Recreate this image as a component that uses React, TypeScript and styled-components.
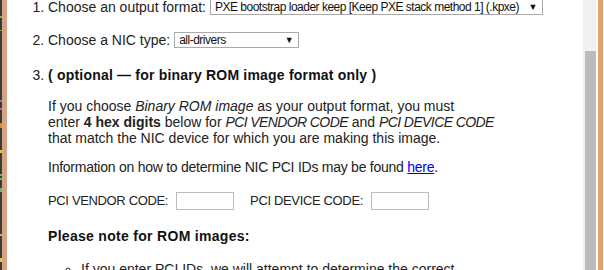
import React from 'react';
import styled, { createGlobalStyle } from 'styled-components';

const GlobalStyle = createGlobalStyle`
  html, body {
    margin: 0;
    padding: 0;
    background: #ffffff;
    overflow: hidden;
  }
  body {
    font-family: 'Liberation Sans', Arial, sans-serif;
    color: #222222;
  }
`;

const Frame = styled.div`
  display: flex;
  width: 604px;
  height: 270px;
  overflow: hidden;
  background: #ffffff;
`;

const LeftEdge = styled.div`
  width: 7px;
  flex: none;
  display: flex;
`;

const DarkStrip = styled.div`
  width: 2px;
  background: linear-gradient(
    to bottom,
    #3a3a3a 0 16px,
    #7ab85a 16px 18px,
    #3a3a3a 18px 30px,
    #9aa35a 30px 31px,
    #3a3a3a 31px 100px,
    #6a8aa8 100px 102px,
    #3a3a3a 102px 108px,
    #c060a0 108px 110px,
    #3a3a3a 110px 123px,
    #e08a20 123px 128px,
    #3a3a3a 128px 150px,
    #d8d040 150px 153px,
    #3a3a3a 153px 174px,
    #60c060 174px 176px,
    #3a3a3a 176px 178px,
    #60c060 178px 180px,
    #3a3a3a 180px 188px,
    #60c060 188px 192px,
    #3a3a3a 192px 234px,
    #c8c040 234px 236px,
    #3a3a3a 236px 258px,
    #d8d040 258px 262px,
    #3a3a3a 262px
  );
`;

const TanStrip = styled.div`
  flex: 1;
  background: #d6a482;
`;

const Content = styled.div`
  flex: 1;
  padding-left: 1px;
  font-size: 14px;
  line-height: 16px;
`;

const Steps = styled.ol`
  margin: -1px 0 0;
  padding-left: 40px;
`;

const Step = styled.li<{ $gap?: number }>`
  margin-bottom: ${(p) => p.$gap ?? 17}px;
`;

const StepRow = styled.div`
  display: flex;
  align-items: center;
  gap: 4px;
  height: 16px;
`;

const Select = styled.div<{ $width: number }>`
  display: flex;
  align-items: center;
  justify-content: space-between;
  box-sizing: border-box;
  width: ${(p) => p.$width}px;
  height: 16px;
  padding: 0 5px 0 4px;
  border: 1px solid #a9a9a9;
  background: #ffffff;
  font-size: 12px;
  letter-spacing: -0.5px;
  white-space: nowrap;
  color: #111111;
`;

const Arrow = styled.span`
  font-size: 9px;
  color: #111111;
`;

const Heading = styled.div`
  font-weight: bold;
  color: #111111;
  letter-spacing: 0.2px;
`;

const Paragraph = styled.p<{ $top: number; $tight?: boolean }>`
  margin: ${(p) => p.$top}px 0 0;
  white-space: nowrap;
  letter-spacing: ${(p) => (p.$tight ? '-0.25px' : 'normal')};
`;

const Em = styled.em`
  font-style: italic;
`;

const CapsEm = styled.em`
  font-style: italic;
  letter-spacing: -0.6px;
`;

const Link = styled.a`
  color: #0000ee;
  text-decoration: underline;
`;

const CodeRow = styled.div`
  display: flex;
  align-items: center;
  margin-top: 17px;
  height: 18px;
  font-size: 13px;
  letter-spacing: -0.35px;
`;

const CodeField = styled.label`
  display: flex;
  align-items: center;
  gap: 8px;
  margin-right: 16px;
`;

const CodeInput = styled.div`
  box-sizing: border-box;
  width: 58px;
  height: 18px;
  border: 1px solid #bdbdbd;
  background: #ffffff;
`;

const NoteTitle = styled.div`
  margin-top: 18px;
  font-weight: bold;
  color: #111111;
  letter-spacing: 0.3px;
`;

const Notes = styled.ul`
  margin: 17px 0 0;
  padding-left: 33px;
  list-style-type: circle;
  white-space: nowrap;
`;

const Scrollbar = styled.div`
  width: 13px;
  flex: none;
  background: #f0f0f0;
  padding: 51px 0 0 2px;
  box-sizing: border-box;
`;

const Thumb = styled.div`
  width: 11px;
  height: 260px;
  background: #bcbcbc;
`;

const RightEdge = styled.div`
  width: 8px;
  flex: none;
  display: flex;
`;

const WhiteGap = styled.div`
  width: 2px;
  background: #ffffff;
`;

const OrangeStrip = styled.div`
  width: 5px;
  background: #e2a46e;
`;

const Tail = styled.div`
  flex: 1;
  background: #f4f4f4;
`;

const App: React.FunctionComponent = () => {
  return (
    <>
      <GlobalStyle />
      <Frame>
        <LeftEdge>
          <DarkStrip />
          <TanStrip />
        </LeftEdge>
        <Content>
          <Steps>
            <Step>
              <StepRow>
                Choose an output format:
                <Select $width={333}>
                  PXE bootstrap loader keep [Keep PXE stack method 1] (.kpxe)
                  <Arrow>▼</Arrow>
                </Select>
              </StepRow>
            </Step>
            <Step $gap={19}>
              <StepRow>
                Choose a NIC type:
                <Select $width={125}>
                  all-drivers
                  <Arrow>▼</Arrow>
                </Select>
              </StepRow>
            </Step>
            <Step>
              <Heading>( optional — for binary ROM image format only )</Heading>
              <Paragraph $top={15}>
                If you choose <Em>Binary ROM image</Em> as your output format, you must
                <br />
                enter <strong>4 hex digits</strong> below for <CapsEm>PCI VENDOR CODE</CapsEm> and{' '}
                <CapsEm>PCI DEVICE CODE</CapsEm>
                <br />
                that match the NIC device for which you are making this image.
              </Paragraph>
              <Paragraph $top={13} $tight>
                Information on how to determine NIC PCI IDs may be found{' '}
                <Link href="#">here</Link>.
              </Paragraph>
              <CodeRow>
                <CodeField>
                  PCI VENDOR CODE:
                  <CodeInput />
                </CodeField>
                <CodeField>
                  PCI DEVICE CODE:
                  <CodeInput />
                </CodeField>
              </CodeRow>
              <NoteTitle>Please note for ROM images:</NoteTitle>
              <Notes>
                <li>If you enter PCI IDs, we will attempt to determine the correct</li>
              </Notes>
            </Step>
          </Steps>
        </Content>
        <Scrollbar>
          <Thumb />
        </Scrollbar>
        <RightEdge>
          <WhiteGap />
          <OrangeStrip />
          <Tail />
        </RightEdge>
      </Frame>
    </>
  );
};

export default App;
